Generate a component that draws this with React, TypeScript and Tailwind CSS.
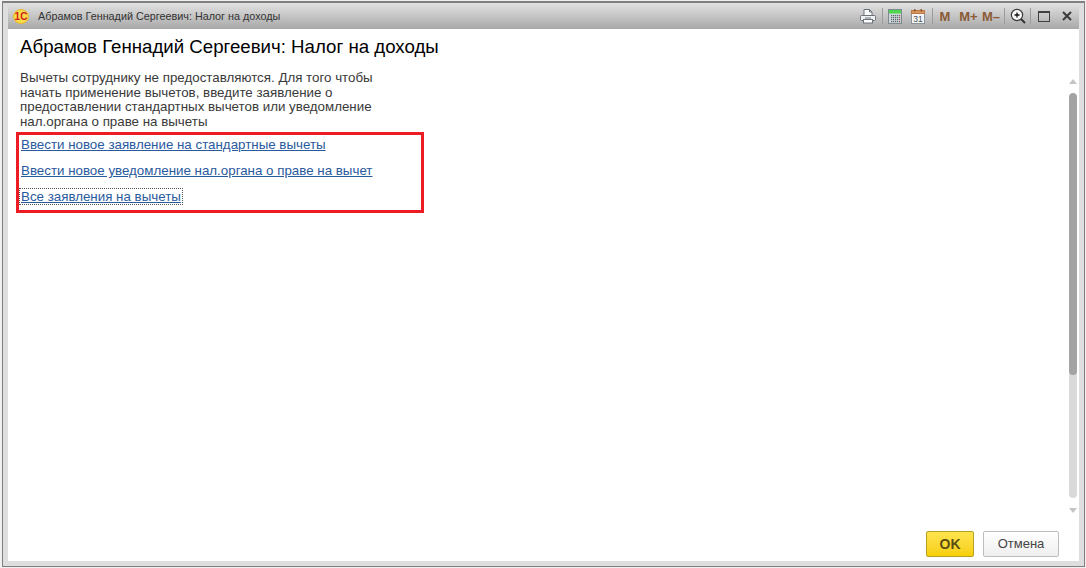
import React from "react";

const Sep = ({ ml }: { ml: string }) => <div className={`w-px h-[16px] bg-[#9c9c9c] ${ml}`} />;

function Printer() {
  return (
    <svg width="16" height="15" viewBox="0 0 16 15" fill="none">
      <path d="M4 6.5V0.5h5.5L12 3v3.5" fill="#fff" stroke="#6a737b" />
      <path d="M9.5 0.5V3H12" stroke="#6a737b" />
      <rect x="0.5" y="6.5" width="15" height="5" rx="1" fill="#eef1f3" stroke="#6a737b" />
      <rect x="3.5" y="10.5" width="9" height="3.5" fill="#fff" stroke="#6a737b" />
      <path d="M5 9h6" stroke="#6a737b" />
    </svg>
  );
}

function Calc() {
  return (
    <svg width="14" height="15" viewBox="0 0 14 15">
      <rect x="0.5" y="0.5" width="13" height="14" fill="#cfd6da" stroke="#7d8a90" />
      <rect x="1" y="1" width="12" height="3.5" fill="#4fd64f" />
      {[6, 8, 10, 12].map((y) =>
        [3, 5, 7, 9, 11].map((x) => (
          <rect key={`${x}-${y}`} x={x} y={y} width="1.2" height="1.2" fill={x === 11 ? "#a05050" : "#59666c"} />
        ))
      )}
    </svg>
  );
}

function Cal() {
  return (
    <svg width="14" height="15" viewBox="0 0 14 15">
      <rect x="0.5" y="1.5" width="13" height="13" fill="#f3f5f6" stroke="#8b9398" />
      <rect x="0.5" y="1.5" width="13" height="3" fill="#d8955c" stroke="#b9794a" />
      <rect x="3" y="0" width="1.5" height="2.5" fill="#8a5a34" />
      <rect x="9.5" y="0" width="1.5" height="2.5" fill="#8a5a34" />
      <text x="7" y="13" textAnchor="middle" fontSize="8.5" fill="#46515a" fontFamily="Liberation Sans, sans-serif">31</text>
    </svg>
  );
}

function Zoom() {
  return (
    <svg width="16" height="16" viewBox="0 0 16 16" fill="none">
      <circle cx="7" cy="7" r="5.6" fill="#f7f7f7" stroke="#3a3a3a" strokeWidth="1.2" />
      <path d="M4.5 7h5M7 4.5v5" stroke="#111" strokeWidth="1.3" />
      <path d="M11 11l4 4" stroke="#333" strokeWidth="2" />
    </svg>
  );
}

function Maxi() {
  return (
    <svg width="12" height="11" viewBox="0 0 12 11" fill="none">
      <rect x="0.5" y="0.5" width="11" height="10" stroke="#3f3f3f" />
      <path d="M0 1.5h12" stroke="#3f3f3f" />
    </svg>
  );
}

function Close() {
  return (
    <svg width="10" height="10" viewBox="0 0 10 10" fill="none">
      <path d="M1 1l8 8M9 1l-8 8" stroke="#3a3a3a" strokeWidth="2" />
    </svg>
  );
}

function Logo() {
  return (
    <svg width="16" height="15" viewBox="0 0 16 15">
      <ellipse cx="8" cy="7.5" rx="7.5" ry="7" fill="#f8dc4a" stroke="#e8b62c" />
      <text x="8" y="11" textAnchor="middle" fontSize="10" fontWeight="bold" fill="#d0201c" fontFamily="Liberation Sans, sans-serif">1С</text>
    </svg>
  );
}

const Link = ({ children, focus }: { children: React.ReactNode; focus?: boolean }) => (
  <div className="h-[26px] flex items-start">
    <a
      href="#"
      className={`text-[#2a5a9e] underline text-[13.33px] leading-[15px] px-px ${focus ? "outline-1 outline-dotted outline-[#555]" : ""}`}
    >
      {children}
    </a>
  </div>
);

export default function App() {
  return (
    <div className="w-[1086px] h-[568px] bg-[#f0f0f0] pt-px pl-[2px] pr-px pb-px overflow-hidden font-['Liberation_Sans',Arial,sans-serif]">
      <div className="w-full h-full border border-t-2 border-[#808080] bg-[#dedede] flex flex-col">
        <div className="h-[26px] shrink-0 bg-[linear-gradient(to_right,#dedede_5px,transparent_5px,transparent_calc(100%-5px),#dedede_calc(100%-5px)),linear-gradient(to_bottom,#e2e2e2,#a8a8a8)] flex items-center pl-[10px] pr-[12px]">
          <Logo />
          <span className="ml-[9px] text-[10.8px] text-[#333] leading-none">Абрамов Геннадий Сергеевич: Налог на доходы</span>
          <div className="ml-auto flex items-center">
            <Printer />
            <Sep ml="ml-[6px]" />
            <div className="ml-[5px] flex"><Calc /></div>
            <div className="ml-[9px] flex"><Cal /></div>
            <Sep ml="ml-[7px]" />
            <span className="ml-[6px] w-[12px] text-center text-[#8a5a34] text-[13px] font-bold leading-none">M</span>
            <span className="ml-[8px] w-[19px] text-center text-[#8a5a34] text-[13px] font-bold leading-none">M+</span>
            <span className="ml-[4px] w-[17px] text-center text-[#8a5a34] text-[13px] font-bold leading-none whitespace-nowrap">M–</span>
            <Sep ml="ml-[5px]" />
            <div className="ml-[5px] flex"><Zoom /></div>
            <Sep ml="ml-[4px]" />
            <div className="ml-[7px] flex"><Maxi /></div>
            <div className="ml-[12px] flex"><Close /></div>
          </div>
        </div>
        <div className="flex-1 mx-[5px] mb-[5px] bg-white flex flex-col min-h-0">
          <div className="flex-1 flex min-h-0">
            <div className="flex-1 pl-[12px] pt-[8px] min-w-0">
              <h1 className="text-[18.67px] leading-[20px] text-black font-normal whitespace-nowrap">Абрамов Геннадий Сергеевич: Налог на доходы</h1>
              <p className="mt-[14px] w-[370px] text-[13.33px] leading-[14.6px] text-[#3a3a3a]">
                Вычеты сотруднику не предоставляются. Для того чтобы начать применение вычетов, введите заявление о предоставлении стандартных вычетов или уведомление нал.органа о праве на вычеты
              </p>
              <div className="relative mt-[8px] -ml-[4px] pl-[4px] w-[408px] h-[80px] box-border">
                <div className="absolute left-0 -top-[5px] w-[408px] h-[81px] border-[3px] border-[#ed1c24]" />
                <div className="relative">
                  <Link>Ввести новое заявление на стандартные вычеты</Link>
                  <Link>Ввести новое уведомление нал.органа о праве на вычет</Link>
                  <Link focus>Все заявления на вычеты</Link>
                </div>
              </div>
            </div>
            <div className="w-[8px] mr-[2px] mt-[50px] mb-[4px] flex flex-col items-center shrink-0">
              <div className="w-0 h-0 border-l-[4px] border-r-[4px] border-b-[5px] border-l-transparent border-r-transparent border-b-[#c4c4c4]" />
              <div className="mt-[9px] flex-1 w-[8px] rounded-[4px] bg-[#dadada] overflow-hidden">
                <div className="h-[282px] rounded-[4px] bg-[#a3a3a3]" />
              </div>
              <div className="mt-[10px] w-0 h-0 border-l-[4px] border-r-[4px] border-t-[5px] border-l-transparent border-r-transparent border-t-[#c4c4c4]" />
            </div>
          </div>
          <div className="h-[44px] shrink-0 flex items-start justify-end pr-[20px] pt-[14px] gap-[9px]">
            <button className="w-[48px] h-[26px] rounded-[2px] border border-[#b5a020] bg-gradient-to-b from-[#ffe44d] to-[#f7cf00] text-[14px] font-bold text-[#5a4e10]">OK</button>
            <button className="w-[76px] h-[26px] rounded-[2px] border border-[#bdbdbd] bg-gradient-to-b from-white to-[#efefef] text-[13px] text-[#444]">Отмена</button>
          </div>
        </div>
      </div>
    </div>
  );
}
